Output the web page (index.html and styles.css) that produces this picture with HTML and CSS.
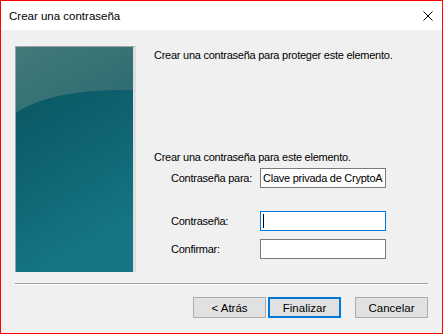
FILE: index.html
```html
<!DOCTYPE html>
<html lang="es">
<head>
    <meta charset="UTF-8">
    <title>Crear una contraseña</title>
    <link rel="stylesheet" href="styles.css">
</head>
<body>
    <div class="window">
        <div class="titlebar">
            <span class="title">Crear una contraseña</span>
            <svg class="close" width="10" height="10" viewBox="0 0 10 10">
                <path d="M0.5 0.5 L9.5 9.5 M9.5 0.5 L0.5 9.5" stroke="#000" stroke-width="1" fill="none"/>
            </svg>
        </div>

        <div class="content">
            <div class="banner">
                <svg width="117" height="225" viewBox="0 0 117 225">
                    <defs>
                        <linearGradient id="lower" x1="0" y1="0" x2="0.3" y2="1">
                            <stop offset="0" stop-color="#07525b"/>
                            <stop offset="0.5" stop-color="#0e6170"/>
                            <stop offset="1" stop-color="#167584"/>
                        </linearGradient>
                        <linearGradient id="upper" x1="0" y1="0" x2="1" y2="1">
                            <stop offset="0" stop-color="#437979"/>
                            <stop offset="1" stop-color="#2a6a6f"/>
                        </linearGradient>
                    </defs>
                    <rect width="117" height="225" fill="url(#lower)"/>
                    <path d="M0 0 H117 V43 C70 42 25 48 0 66 Z" fill="url(#upper)"/>
                </svg>
            </div>

            <div class="panel">
                <p class="intro">Crear una contraseña para proteger este elemento.</p>
                <p class="lead">Crear una contraseña para este elemento.</p>
                <div class="fields">
                    <label for="item">Contraseña para:</label>
                    <input type="text" id="item" value="Clave privada de CryptoAPI" readonly>
                    <label class="spaced">Contraseña:</label>
                    <div class="field focused spaced"><span class="caret"></span></div>
                    <label for="confirm">Confirmar:</label>
                    <input type="password" id="confirm">
                </div>
            </div>
        </div>

        <div class="separator"></div>

        <div class="buttons">
            <button>&lt; Atrás</button>
            <button class="default">Finalizar</button>
            <button class="cancel">Cancelar</button>
        </div>
    </div>
</body>
</html>
```

FILE: styles.css
```css
body {
    margin: 0;
    font-family: "Liberation Sans", Arial, sans-serif;
    font-size: 11px;
    letter-spacing: -0.25px;
    color: #000;
}

.window {
    width: 443px;
    height: 334px;
    box-sizing: border-box;
    border: 1px solid #ff0000;
    background-color: #f0f0f0;
    overflow: hidden;
}

.titlebar {
    height: 29px;
    background-color: #fff;
    display: flex;
    align-items: center;
    justify-content: space-between;
    padding: 0 9px 0 8px;
}

.title {
    font-size: 11.5px;
    letter-spacing: 0;
}

.close {
    display: block;
}

.content {
    display: flex;
    padding: 16px 0 0 14px;
}

.banner {
    width: 117px;
    height: 225px;
    border-top: 1px solid #a0a0a0;
    border-left: 1px solid #a0a0a0;
    border-right: 3px solid #dedede;
}

.banner svg {
    display: block;
}

.panel {
    margin-left: 18px;
}

.panel p {
    margin: 0;
    line-height: 15px;
    white-space: nowrap;
}

.intro {
    padding-top: 2px;
}

.lead {
    margin-top: 87px !important;
}

.fields {
    display: grid;
    grid-template-columns: 89px 126px;
    row-gap: 8px;
    margin: 3px 0 0 17px;
    align-items: start;
}

.fields label {
    padding-top: 4px;
    white-space: nowrap;
}

.fields input,
.fields .field {
    box-sizing: border-box;
    width: 126px;
    height: 20px;
    margin: 0;
    padding: 0 2px;
    border: 1px solid #7a7a7a;
    background-color: #fff;
    font-family: inherit;
    font-size: 11px;
    letter-spacing: -0.25px;
    outline: none;
}

.fields .focused {
    border-color: #0078d7;
    padding: 2px 2px;
}

.fields .spaced {
    margin-top: 15px;
}

.caret {
    display: block;
    width: 1px;
    height: 14px;
    background-color: #000;
}

.separator {
    margin: 11px 14px 0 14px;
    height: 1px;
    background-color: #a0a0a0;
    border-bottom: 1px solid #fff;
}

.buttons {
    display: flex;
    justify-content: flex-end;
    padding: 12px 14px 0 0;
}

.buttons button {
    box-sizing: border-box;
    width: 73px;
    height: 21px;
    margin-left: 2px;
    padding: 0;
    background-color: #e1e1e1;
    border: 1px solid #adadad;
    font-family: inherit;
    font-size: 11.5px;
    color: #000;
}

.buttons .default {
    border: 2px solid #0078d7;
}

.buttons .cancel {
    margin-left: 14px;
}
```
